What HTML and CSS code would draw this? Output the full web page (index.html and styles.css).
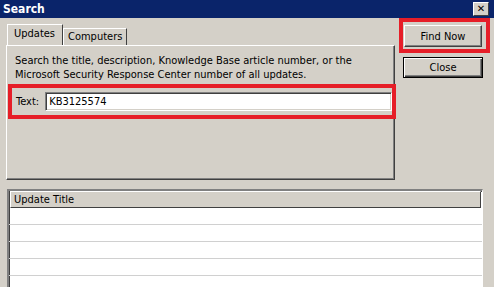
FILE: index.html
```html
<!DOCTYPE html>
<html lang="en">
<head>
  <meta charset="UTF-8" />
  <title>Search</title>
  <link rel="stylesheet" href="styles.css">
</head>
<body>
  <div class="window">
    <div class="titlebar">
      <span class="title">Search</span>
      <span class="close-x">&#x2715;</span>
    </div>

    <div class="top-area">
      <div class="left-col">
        <div class="tabs">
          <div class="tab active">Updates</div>
          <div class="tab">Computers</div>
        </div>
        <div class="panel">
          <p class="hint">Search the title, description, Knowledge Base article number, or the Microsoft Security Response Center number of all updates.</p>
          <div class="mark text-row">
            <label>Text:</label>
            <div class="textbox">KB3125574</div>
          </div>
        </div>
      </div>

      <div class="right-col">
        <div class="mark find-mark">
          <button class="btn">Find Now</button>
        </div>
        <button class="btn close-btn">Close</button>
      </div>
    </div>

    <div class="list">
      <div class="list-head">Update Title</div>
      <div class="row"></div>
      <div class="row"></div>
      <div class="row"></div>
      <div class="row"></div>
      <div class="row"></div>
    </div>
  </div>
</body>
</html>
```

FILE: styles.css
```css
:root {
  --face: #d4d0c8;
  --title: #0a246a;
  --mark: #e61e28;
  --shadow: #808080;
  --dark: #404040;
}

body {
  margin: 0;
  font-family: "DejaVu Sans Condensed", "Liberation Sans", sans-serif;
  font-size: 11px;
  color: #000;
  background: var(--face);
}

.window {
  width: 494px;
  height: 287px;
  overflow: hidden;
  background: var(--face);
}

.titlebar {
  height: 18px;
  background: var(--title);
  display: flex;
  align-items: center;
  justify-content: space-between;
  padding: 0 5px 0 3px;
}

.title {
  color: #fff;
  font-weight: bold;
  font-size: 12px;
}

.close-x {
  width: 14px;
  height: 12px;
  background: var(--face);
  border: 1px solid;
  border-color: #fff var(--dark) var(--dark) #fff;
  font-family: "DejaVu Sans", sans-serif;
  font-size: 10px;
  font-weight: bold;
  line-height: 12px;
  text-align: center;
}

.top-area {
  display: flex;
  height: 162px;
}

.left-col {
  width: 389px;
  margin-left: 6px;
  padding-top: 6px;
}

.tabs {
  display: flex;
  align-items: flex-end;
  height: 21px;
  padding-left: 1px;
}

.tab {
  height: 16px;
  padding: 0 4px 0 4px;
  border: 1px solid;
  border-bottom: none;
  border-color: #fff var(--dark) transparent #fff;
  line-height: 15px;
}

.tab.active {
  height: 20px;
  padding: 0 7px 0 6px;
  line-height: 17px;
}

.panel {
  height: 133px;
  border: 1px solid;
  border-color: #fff var(--dark) var(--dark) #fff;
  box-shadow: inset -1px -1px 0 var(--shadow);
}

.hint {
  margin: 8px 0 0 8px;
  line-height: 14px;
  width: 345px;
}

.mark {
  border: 4px solid var(--mark);
}

.text-row {
  margin: 2px 0 0 1px;
  height: 27px;
  display: flex;
  align-items: center;
  gap: 6px;
  padding-left: 4px;
  width: 376px;
}

.textbox {
  flex: 1;
  height: 17px;
  background: #fff;
  border: 1px solid;
  border-color: var(--shadow) #fff #fff var(--shadow);
  box-shadow: inset 1px 1px 0 var(--dark), inset -1px -1px 0 var(--face);
  padding-left: 3px;
  line-height: 17px;
}

.right-col {
  margin-left: 4px;
  display: flex;
  flex-direction: column;
}

.find-mark {
  box-sizing: border-box;
  width: 91px;
  height: 35px;
  padding: 3px 4px 2px 1px;
  margin-bottom: 4px;
}

.btn {
  font-family: inherit;
  font-size: 11px;
  background: var(--face);
  color: #000;
  width: 78px;
  height: 22px;
  padding: 0;
  border: 1px solid;
  border-color: #fff var(--dark) var(--dark) #fff;
  box-shadow: inset -1px -1px 0 var(--shadow);
}

.close-btn {
  margin-left: 4px;
  width: 80px;
  height: 21px;
  border: 1px solid #000;
  box-shadow: inset 1px 1px 0 #fff, inset -1px -1px 0 var(--dark), inset -2px -2px 0 var(--shadow);
}

.list {
  margin: 9px 0 0 7px;
  width: 473px;
  height: 100px;
  background: #fff;
  border-top: 2px solid var(--shadow);
  border-left: 2px solid var(--shadow);
  border-right: 1px solid #fff;
  box-shadow: inset 1px 1px 0 var(--dark);
}

.list-head {
  height: 15px;
  margin: 0 1px 0 1px;
  padding-left: 3px;
  background: var(--face);
  border: 1px solid;
  border-color: #fff var(--dark) var(--dark) #fff;
  line-height: 15px;
}

.row {
  height: 16px;
  border-bottom: 1px solid #d0d0d0;
}
```
